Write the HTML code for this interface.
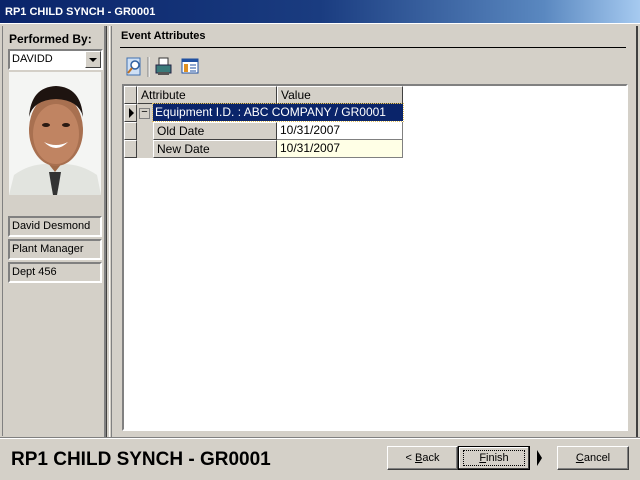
<!DOCTYPE html>
<html><head><style>
*{margin:0;padding:0;box-sizing:border-box}
body{width:640px;height:480px;background:#d4d0c8;font-family:"Liberation Sans",Arial,sans-serif;font-size:11px;position:relative;overflow:hidden;color:#000}
.abs{position:absolute}
.title{left:0;top:0;width:640px;height:24px;background:linear-gradient(90deg,#0a246a,#1a3c80 50%,#5a88c0 85%,#a6caf0);color:#fff;font-weight:bold;font-size:11px;line-height:24px;padding-left:5px;border-bottom:1px solid #fff}
.field{left:8px;width:94px;height:21px;border:2px solid;border-color:#808080 #fff #fff #808080;line-height:17px;padding-left:2px;font-size:11px;color:#000}
.grid{left:122px;top:84px;width:506px;height:347px;background:#fff;border:2px solid;border-color:#808080 #fff #fff #808080;font-size:12px}
.cell{position:absolute;height:18px;border:1px solid;border-color:#fff #404040 #404040 #fff;background:#d4d0c8;line-height:16px;padding-left:3px}
.btn{top:446px;height:24px;border:1px solid;border-color:#fff #404040 #404040 #fff;background:#d4d0c8;text-align:center;line-height:22px;font-size:11px;box-shadow:inset -1px -1px #808080}
</style></head><body>
<div class="abs title">RP1 CHILD SYNCH - GR0001</div>
<div class="abs" style="left:2px;top:26px;width:1px;height:410px;background:#808080"></div>
<div class="abs" style="left:104px;top:26px;width:2px;height:412px;background:#808080"></div>
<div class="abs" style="left:106px;top:26px;width:1px;height:412px;background:#404040"></div>
<div class="abs" style="left:109px;top:26px;width:1px;height:412px;background:#fff"></div>
<div class="abs" style="left:111px;top:26px;width:1px;height:412px;background:#808080"></div>
<div class="abs" style="left:636px;top:26px;width:2px;height:412px;background:#404040"></div>
<div class="abs" style="left:9px;top:32px;font-weight:bold;font-size:12px">Performed By:</div>
<div class="abs" style="left:8px;top:49px;width:95px;height:21px;background:#fff;border:2px solid;border-color:#808080 #fff #fff #808080;line-height:17px;padding-left:2px">DAVIDD</div>
<div class="abs" style="left:85px;top:51px;width:16px;height:17px;background:#d4d0c8;border:1px solid;border-color:#fff #404040 #404040 #fff"><div style="margin:6px auto 0;width:0;height:0;border-left:4px solid transparent;border-right:4px solid transparent;border-top:4px solid #000"></div></div>
<svg class="abs" style="left:9px;top:72px" width="92" height="123" viewBox="0 0 92 123">
<rect width="92" height="123" fill="#f4f5f3"/>
<path d="M0 123 L5 103 Q20 92 38 92 L54 92 Q72 92 88 103 L92 123Z" fill="#e2e4df"/>
<path d="M40 100 L52 100 L50 112 L48 123 L44 123 L42 112Z" fill="#333"/>
<path d="M38 90 L46 100 L54 90 L54 85 L38 85Z" fill="#a06a48"/>
<ellipse cx="47" cy="58" rx="27" ry="36" fill="#a87050"/>
<ellipse cx="47" cy="62" rx="23" ry="30" fill="#c08462"/>
<path d="M20 45 Q22 15 47 14 Q72 15 74 45 Q70 28 47 27 Q24 28 20 45Z" fill="#1e1410"/>
<path d="M35 70 Q47 82 59 70 Q47 76 35 70Z" fill="#fff"/>
<ellipse cx="37" cy="53" rx="4" ry="2" fill="#2a1a12"/><ellipse cx="57" cy="53" rx="4" ry="2" fill="#2a1a12"/>
</svg>
<div class="abs field" style="top:216px">David Desmond</div>
<div class="abs field" style="top:239px">Plant Manager</div>
<div class="abs field" style="top:262px">Dept 456</div>
<div class="abs" style="left:121px;top:30px;font-weight:bold;font-size:11px">Event Attributes</div>
<div class="abs" style="left:120px;top:47px;width:506px;height:1px;background:#000"></div>
<svg class="abs" style="left:124px;top:56px" width="90" height="22">
<rect x="3" y="2" width="13" height="17" fill="#cfe0f5" stroke="#4070b0"/><circle cx="11" cy="9" r="4" fill="#fff" stroke="#3060a0" stroke-width="1.5"/><line x1="8" y1="12" x2="4" y2="17" stroke="#c07020" stroke-width="2"/>
<line x1="24" y1="1" x2="24" y2="21" stroke="#808080"/><line x1="25" y1="1" x2="25" y2="21" stroke="#fff"/>
<rect x="35" y="2" width="9" height="8" fill="#fff" stroke="#333"/><rect x="32" y="9" width="15" height="8" fill="#3a7a7a" stroke="#224"/><rect x="34" y="16" width="11" height="3" fill="#555"/>
<rect x="58" y="3" width="16" height="14" fill="#fff" stroke="#2050a0"/><rect x="58" y="3" width="16" height="3" fill="#2050a0"/><rect x="60" y="8" width="4" height="8" fill="#e09020"/><line x1="66" y1="9" x2="72" y2="9" stroke="#2050a0"/><line x1="66" y1="12" x2="72" y2="12" stroke="#2050a0"/><line x1="66" y1="15" x2="72" y2="15" stroke="#2050a0"/>
</svg>
<div class="abs grid">
<div class="cell" style="left:0;top:0;width:13px"></div>
<div class="cell" style="left:13px;top:0;width:140px">Attribute</div>
<div class="cell" style="left:153px;top:0;width:126px">Value</div>
<div class="cell" style="left:0;top:18px;width:13px"><div style="margin:3px 0 0 1px;width:0;height:0;border-top:5px solid transparent;border-bottom:5px solid transparent;border-left:5px solid #000"></div></div>
<div class="cell" style="left:0;top:36px;width:13px"></div>
<div class="cell" style="left:0;top:54px;width:13px"></div>
<div class="abs" style="left:13px;top:18px;width:17px;height:54px;background:#d4d0c8"></div>
<div class="abs" style="left:15px;top:22px;width:11px;height:11px;border:1px solid #808080;background:#d4d0c8;line-height:7px;text-align:center;font-size:11px">−</div>
<div class="abs" style="left:29px;top:18px;width:250px;height:17px;background:#0a246a;color:#fff;line-height:17px;padding-left:2px;outline:1px dotted #e0c060">Equipment I.D. : ABC COMPANY / GR0001</div>
<div class="cell" style="left:29px;top:36px;width:124px">Old Date</div>
<div class="abs" style="left:153px;top:36px;width:126px;height:18px;background:#fff;border-right:1px solid #808080;border-bottom:1px solid #808080;line-height:17px;padding-left:3px">10/31/2007</div>
<div class="cell" style="left:29px;top:54px;width:124px">New Date</div>
<div class="abs" style="left:153px;top:54px;width:126px;height:18px;background:#ffffe6;border-right:1px solid #808080;border-bottom:1px solid #808080;line-height:17px;padding-left:3px">10/31/2007</div>
</div>
<div class="abs" style="left:0;top:437px;width:640px;height:1px;background:#808080"></div>
<div class="abs" style="left:0;top:438px;width:640px;height:1px;background:#fff"></div>
<div class="abs" style="left:11px;top:449px;font-weight:bold;font-size:19px">RP1 CHILD SYNCH - GR0001</div>
<div class="abs btn" style="left:387px;width:71px">&lt; <u>B</u>ack</div>
<div class="abs btn" style="left:458px;width:72px;border:1px solid #000;box-shadow:inset -1px -1px #404040,inset 1px 1px #fff"><span style="display:inline-block;border:1px dotted #000;width:62px;height:16px;line-height:14px;margin-top:3px"><u>F</u>inish</span></div>
<div class="abs" style="left:537px;top:450px;width:0;height:0;border-top:8px solid transparent;border-bottom:8px solid transparent;border-left:5px solid #000"></div>
<div class="abs btn" style="left:557px;width:72px"><u>C</u>ancel</div>
</body></html>
